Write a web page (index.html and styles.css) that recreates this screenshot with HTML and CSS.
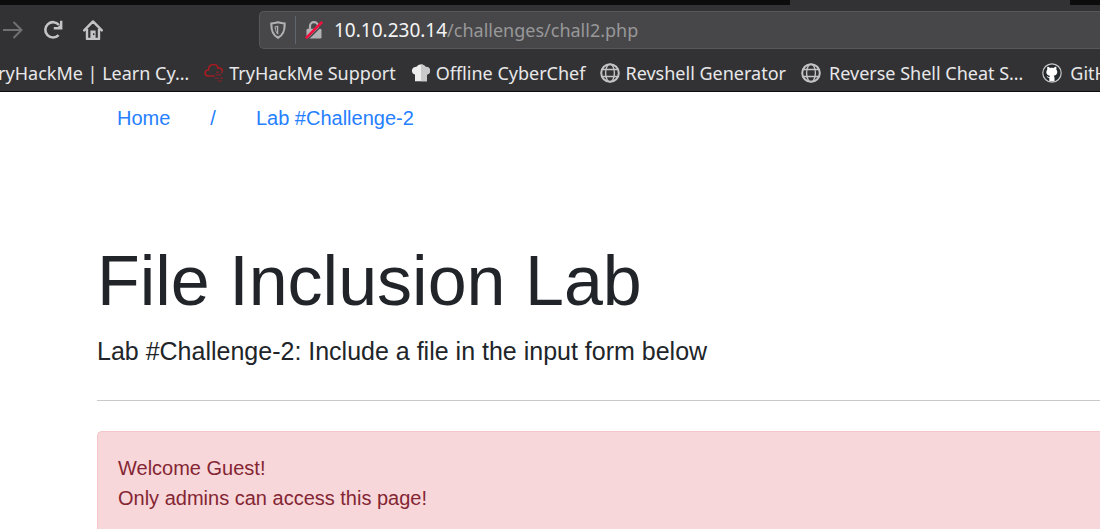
FILE: index.html
```html
<!DOCTYPE html>
<html lang="en">
<head>
<meta charset="utf-8">
<title>File Inclusion Lab</title>
<link rel="stylesheet" href="styles.css">
</head>
<body>
<svg class="symbols" aria-hidden="true">
  <symbol id="globe" viewBox="0 0 20 20">
    <g fill="none" stroke="currentColor">
      <circle cx="10" cy="10" r="8.8" stroke-width="2"/>
      <ellipse cx="10" cy="10" rx="4.4" ry="8.8" stroke-width="1.4"/>
      <path d="M2.5 6.500h15M2.5 13.500h15" stroke-width="1.4"/>
    </g>
  </symbol>
</svg>
<header class="browser">
  <div class="tabs"><div class="tab"></div></div>
  <div class="toolbar">
    <div class="buttons">
      <button class="tool tool-dim" type="button" aria-label="Forward">
        <svg viewBox="0 0 20 20"><path d="M0 10h18.5M10.500 2l8 8-8 8" fill="none" stroke="currentColor" stroke-width="2"/></svg>
      </button>
      <button class="tool" type="button" aria-label="Reload">
        <svg viewBox="0 0 20 20"><path d="M16 5A7.700 7.700 0 1 0 15.600 15.200" fill="none" stroke="currentColor" stroke-width="2.600"/><path d="M19.400.8v8.600h-8.600V7h4l2.200-2V.8z" fill="currentColor"/></svg>
      </button>
      <button class="tool" type="button" aria-label="Home">
        <svg viewBox="0 0 20 20"><path d="M1.200 10.400 10 1.400l8.800 9M4 9v10h12V9" fill="none" stroke="currentColor" stroke-width="2.400" stroke-linejoin="round" stroke-linecap="round"/><path d="M7.400 18.500v-8h5.200v8z" fill="currentColor"/><rect x="10" y="13.300" width="1.400" height="1.800" fill="#323234"/></svg>
      </button>
    </div>
    <div class="address">
      <svg class="shield" viewBox="0 0 16 18"><path d="M8 1.300c2.200.7 4.200 1.100 6.600 1.200.2 6.300-.6 11.300-6.600 14.200C2 13.800 1.200 8.800 1.400 2.500 3.800 2.400 5.800 2 8 1.300z" fill="none" stroke="currentColor" stroke-width="2.200"/><path d="M8.300 4.600v9.200C5.400 12 4.700 9 4.600 5.500 6 5.400 7.200 5.100 8.300 4.600z" fill="currentColor"/><path d="M6.300 6v4.500" stroke="#474749" stroke-width="1"/></svg>
      <span class="divider"></span>
      <svg class="lock" viewBox="0 0 18 18"><path d="M5 9V5.200a4 4 0 0 1 8 0V9" fill="none" stroke="#b1b1b3" stroke-width="2.200"/><rect x="1.500" y="7.800" width="15" height="9.800" rx="1.400" fill="#b1b1b3"/><path d="M2.500 18.500 18.500 3" stroke="#474749" stroke-width="1.600"/><path d="M.8 17.200 17.200 1" stroke="#f01040" stroke-width="2.600"/></svg>
      <label class="host" for="path">10.10.230.14</label>
      <input class="path" id="path" type="text" value="/challenges/chall2.php" spellcheck="false">
    </div>
  </div>
  <nav class="bookmarks" aria-label="Bookmarks">
    <a class="bookmark" href="#">TryHackMe | Learn Cy…</a>
    <a class="bookmark" href="#">
      <svg viewBox="0 0 20 20"><g fill="none" stroke="#a51d22" stroke-width="1.600"><path d="M10.500 13H4.300C-.4 12.500.3 6.900 4.600 7 4.300.2 13.500-.3 14 5.200c2.800-.6 4.500 1 4.500 3.200"/><path d="M12 9.300h3M16.500 9.300h2.500M11.500 11.800h6M11 15.200h3.500M16 15.200h3M14 18h3.500" opacity=".6"/></g></svg>
      TryHackMe Support</a>
    <a class="bookmark" href="#">
      <svg viewBox="0 0 20 20"><path d="M4 18.300V11.500C.3 11.200-.2 5.600 3.200 4.300 5 3.600 5.500 3.800 6 3.400 7.300 1 12.700 1 14 3.400c.5.400 1 .2 2.800.9 3.400 1.300 2.900 6.900-.8 7.200v6.800z" fill="#ededed"/><path d="M10 1.600c1.700 0 3.300.6 4 1.800.5.400 1 .2 2.800.9 3.400 1.300 2.900 6.900-.8 7.200v6.800h-6z" fill="#c9c9c9"/></svg>
      Offline CyberChef</a>
    <a class="bookmark" href="#"><svg><use href="#globe"/></svg>Revshell Generator</a>
    <a class="bookmark bookmark-wide" href="#"><svg><use href="#globe"/></svg>Reverse Shell Cheat S…</a>
    <a class="bookmark bookmark-wide" href="#">
      <svg viewBox="0 0 20 20"><circle cx="10" cy="10" r="9.200" fill="#24292e" stroke="#c8c8c8" stroke-width="1.200"/><path d="M7.300 18.300v-3.500c-1.800.2-2-.8-2.800-1.500 1.500-.2 1.500 1 2.900.7.100-.6.300-.9.600-1.200-3.600-.5-4.700-4-2.700-6.400-.3-.9-.2-1.800.1-2.600 1 0 1.800.6 2.600 1.100 1.200-.3 2.400-.3 3.600 0 .8-.5 1.600-1.100 2.600-1.100.3.800.4 1.700.1 2.600 2 2.400.9 5.900-2.700 6.400.5.500.9 1.100.9 2v3.500z" fill="#fff"/></svg>
      GitHub</a>
  </nav>
</header>
<main class="page">
  <nav class="crumbs" aria-label="Breadcrumb">
    <a href="#">Home</a>
    <a href="#">/</a>
    <a href="#">Lab #Challenge-2</a>
  </nav>
  <section class="intro">
    <h1>File Inclusion Lab</h1>
    <p class="lead">Lab #Challenge-2: Include a file in the input form below</p>
    <hr>
    <div class="alert" role="alert">Welcome Guest!<br>Only admins can access this page!</div>
  </section>
</main>
</body>
</html>
```
FILE: styles.css
```css
* {
  box-sizing: border-box;
}

body {
  margin: 0;
  overflow: hidden;
  background: #fff;
  color: #212529;
  font: 20px/30px "Liberation Sans", Arial, sans-serif;
}

a {
  text-decoration: none;
}

.symbols {
  display: none;
}

.browser {
  overflow: hidden;
  background: #323234;
  border-bottom: 1px solid #0c0c0d;
  color: #e8e8ea;
  font: 18px/24px "Noto Sans", "Open Sans", sans-serif;
}

.tabs {
  display: flex;
  justify-content: flex-end;
  height: 5px;
  padding-right: 30px;
  background: #0c0c0d;
}

.tab {
  width: 280px;
  background: #323234;
}

.toolbar {
  display: flex;
  padding: 6px 0;
}

.buttons {
  display: flex;
  flex: none;
  align-items: center;
  gap: 20px;
  width: 259px;
  padding-left: 3px;
}

.tool {
  width: 20px;
  height: 20px;
  padding: 0;
  border: 0;
  background: none;
  color: #c4c4c6;
}

.tool-dim {
  color: #707072;
}

.tool svg {
  display: block;
  width: 20px;
  height: 20px;
}

.address {
  display: flex;
  flex: 1;
  align-items: center;
  height: 38px;
  padding-left: 10px;
  background: #474749;
  border: 1px solid #58585a;
  border-right: 0;
  border-radius: 5px 0 0 5px;
}

.shield {
  width: 16px;
  height: 18px;
  color: #b1b1b3;
}

.divider {
  width: 1px;
  height: 28px;
  margin: 0 9px;
  background: #5f6670;
}

.lock {
  width: 18px;
  height: 18px;
  margin-right: 11px;
}

.host {
  color: #f4f4f5;
  font-size: 19px;
}

.path {
  flex: 1;
  min-width: 0;
  padding: 0;
  border: 0;
  outline: 0;
  background: none;
  color: #98989a;
  font: inherit;
}

.bookmarks {
  display: flex;
  gap: 15px;
  margin-left: -11px;
  padding: 6px 0;
}

.bookmark {
  display: flex;
  flex: none;
  align-items: center;
  gap: 5px;
  color: inherit;
  white-space: nowrap;
}

.bookmark-wide {
  gap: 8px;
  margin-right: 4px;
}

.bookmark svg {
  width: 20px;
  height: 20px;
  color: #c4c4c6;
}

.page {
  padding: 1px 0 0 97px;
}

.crumbs {
  display: flex;
}

.crumbs a {
  padding: 10px 20px;
  color: #2680ff;
}

.intro {
  padding-top: 96px;
}

h1 {
  margin: 0 0 9px;
  font-size: 70px;
  font-weight: 400;
  line-height: 84px;
}

.lead {
  margin: 0;
  font-size: 25px;
  line-height: 38px;
}

hr {
  height: 1px;
  margin: 30px 0;
  border: 0;
  background: #c8c9c9;
}

.alert {
  padding: 21px 20px;
  border: 1px solid #f5c6cb;
  border-right: 0;
  border-radius: 5px 0 0 5px;
  background: #f7d7da;
  color: #842533;
}
```
